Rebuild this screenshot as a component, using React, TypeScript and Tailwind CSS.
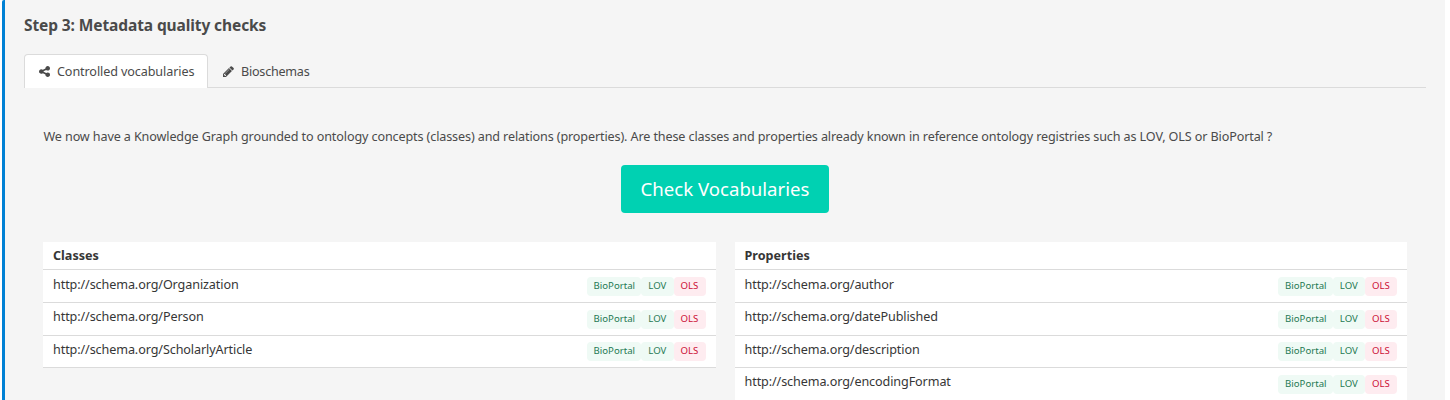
const classes = ['Organization', 'Person', 'ScholarlyArticle'];
const properties = ['author', 'datePublished', 'description', 'encodingFormat'];

function ShareIcon() {
  return (
    <svg viewBox="128 128 1536 1536" className="mr-[7px] size-[11px]" fill="currentColor">
      <path d="M1344 1024q133 0 226.5 93.5t93.5 226.5-93.5 226.5-226.5 93.5-226.5-93.5-93.5-226.5q0-12 2-34l-360-180q-92 86-218 86-133 0-226.5-93.5t-93.5-226.5 93.5-226.5 226.5-93.5q126 0 218 86l360-180q-2-22-2-34 0-133 93.5-226.5t226.5-93.5 226.5 93.5 93.5 226.5-93.5 226.5-226.5 93.5q-126 0-218-86l-360 180q2 22 2 34t-2 34l360 180q92-86 218-86z" />
    </svg>
  );
}

function PencilIcon() {
  return (
    <svg viewBox="128 128 1536 1536" className="mr-[7px] size-[11px]" fill="currentColor">
      <path d="M491 1536l91-91-235-235-91 91v107h128v128h107zm523-928q0-22-22-22-10 0-17 7l-542 542q-7 7-7 17 0 22 22 22 10 0 17-7l542-542q7-7 7-17zm-54-192l416 416-832 832h-416v-416zm683 96q0 53-37 90l-166 166-416-416 166-165q36-38 90-38 53 0 91 38l235 234q37 39 37 91z" />
    </svg>
  );
}

function Tags() {
  return (
    <div className="mt-[6.6px] flex h-[19.2px] text-[9.6px] leading-[18px] text-[#257953]">
      <span className="w-[54.6px] rounded bg-[#effaf5] pl-px text-center">BioPortal</span>
      <span className="w-[32.4px] rounded bg-[#effaf5] text-center">LOV</span>
      <span className="w-[32px] rounded bg-[#feecf0] text-center text-[#cc0f35]">OLS</span>
    </div>
  );
}

function VocabularyTable({ title, terms }: { title: string; terms: string[] }) {
  return (
    <section className="flex-1 self-start bg-white text-[#363636]">
      <h2 className="h-[28.35px] border-b border-[#dbdbdb] px-2.5 text-[12.6px] leading-[27px] font-bold">
        {title}
      </h2>
      {terms.map((term) => (
        <div
          key={term}
          className="flex h-[32.6px] justify-between border-b border-[#dbdbdb] px-2.5"
        >
          <span className="-mt-[0.7px] text-[12.6px] leading-[30px] tracking-[-0.1px]">
            http://schema.org/{term}
          </span>
          <Tags />
        </div>
      ))}
    </section>
  );
}

export default function App() {
  return (
    <div className="h-[400px] overflow-hidden bg-white pr-[5px] pl-[2px]">
      <main className="h-[480px] rounded-l-[2px] border-l-[3px] border-[#0081d5] bg-[#f5f5f5] pr-[19px] pl-[19px] font-['Noto_Sans',sans-serif] text-[#4a4a4a]">
        <h1 className="h-[54px] pt-[13px] text-[15.5px] leading-6 font-bold tracking-[-0.1px]">
          Step 3: Metadata quality checks
        </h1>
        <nav className="flex h-[34px] border-b border-[#dbdbdb] text-[12.6px] leading-[33px]">
          <a className="flex h-[34px] w-[184px] items-center rounded-t border border-b-0 border-[#dbdbdb] bg-white pl-[14px] tracking-[-0.1px]">
            <ShareIcon />
            Controlled vocabularies
          </a>
          <a className="flex h-[34px] items-center pl-[15px] tracking-[-0.24px]">
            <PencilIcon />
            Bioschemas
          </a>
        </nav>
        <div className="px-[19px] pt-[38px]">
          <p className="h-[39px] pt-px pl-[0.5px] text-[12.6px] leading-5 tracking-[-0.123px] whitespace-nowrap">
            We now have a Knowledge Graph grounded to ontology concepts (classes) and relations
            (properties). Are these classes and properties already known in reference ontology
            registries such as LOV, OLS or BioPortal ?
          </p>
          <button className="mx-auto block h-12 w-[208px] rounded bg-[#00d1b2] text-[18.6px] text-white">
            Check Vocabularies
          </button>
          <div className="mt-[29px] flex gap-[19px]">
            <VocabularyTable title="Classes" terms={classes} />
            <VocabularyTable title="Properties" terms={properties} />
          </div>
        </div>
      </main>
    </div>
  );
}
